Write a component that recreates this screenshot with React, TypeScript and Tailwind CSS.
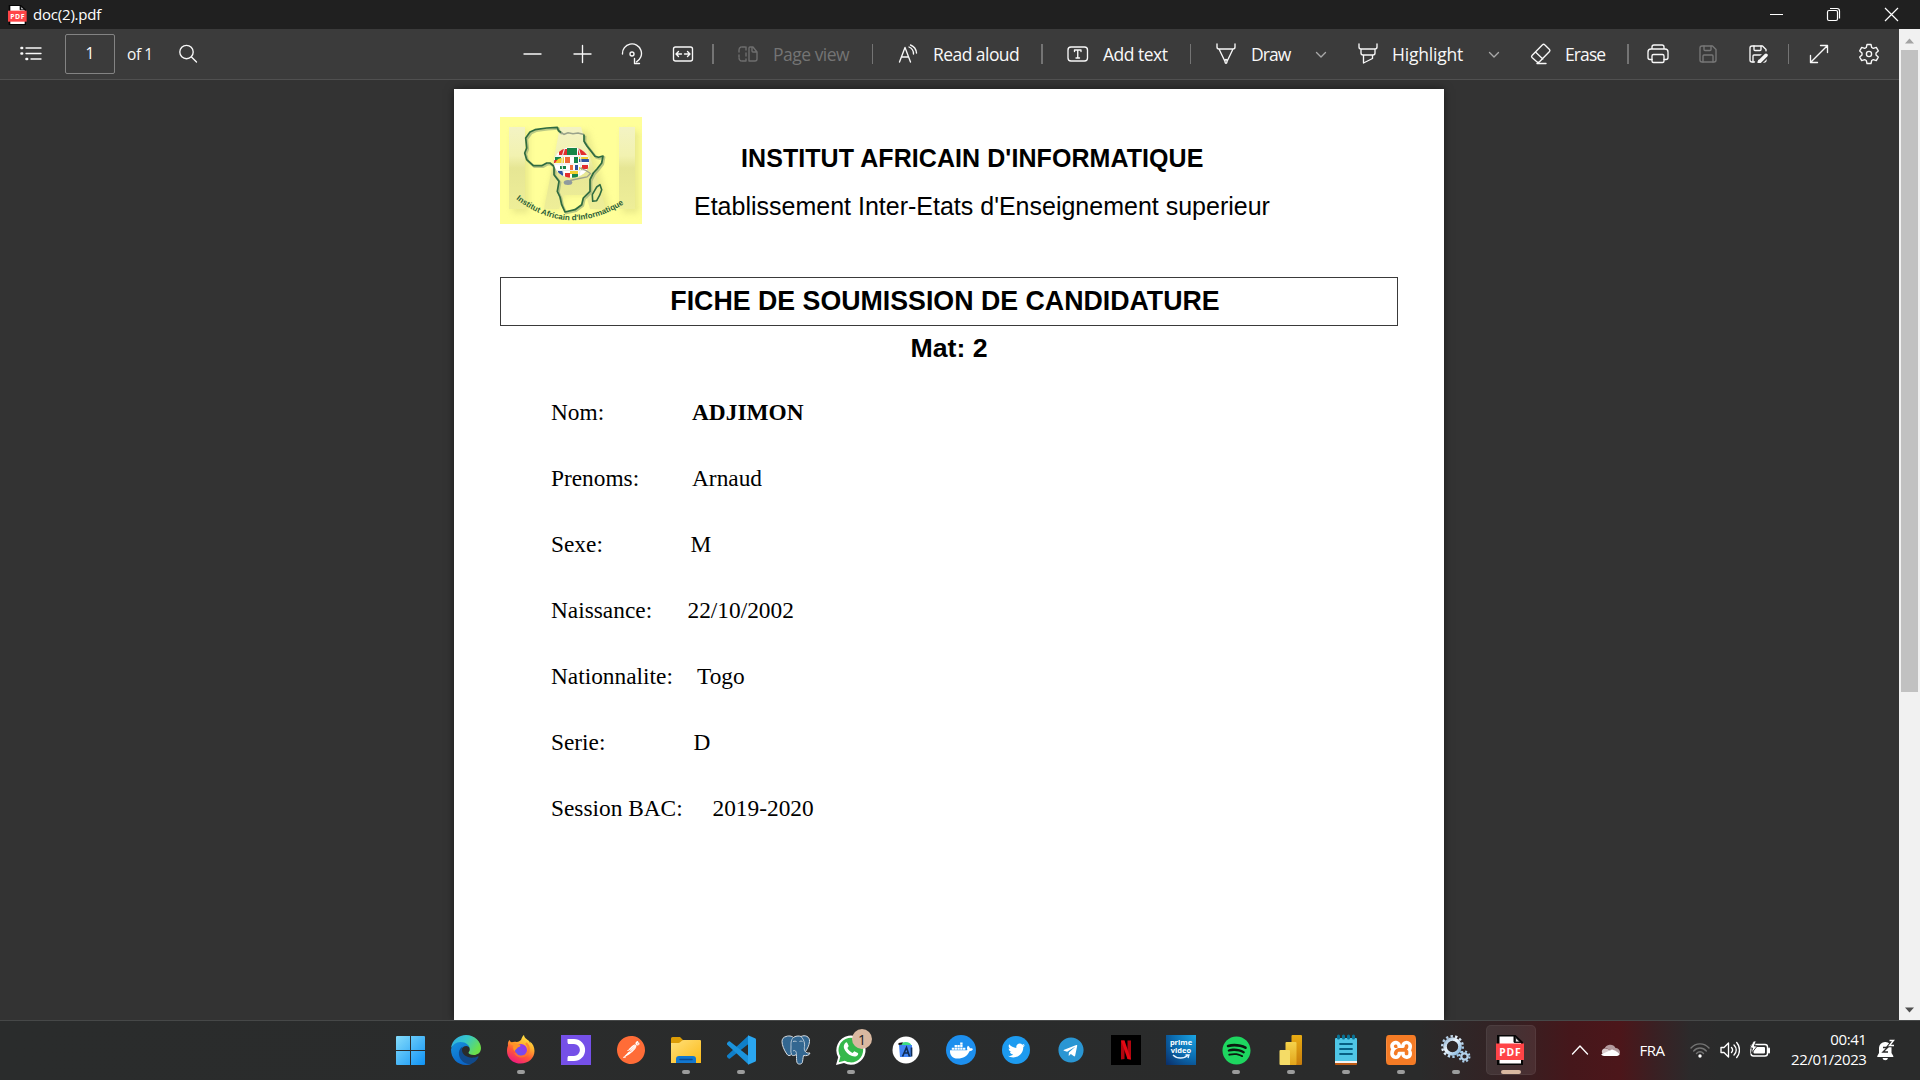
import type { ReactNode } from "react";
import { FaDocker, FaSpotify, FaTelegram, FaTwitter } from "react-icons/fa";
import { SiPostman, SiXampp } from "react-icons/si";

const UI = "font-['Open_Sans','Noto_Sans',sans-serif]";

/* ---------- Toolbar ---------- */

function Line({ size = 20, h, children, className = "" }: { size?: number; h?: number; children: ReactNode; className?: string }) {
  return (
    <svg
      width={size}
      height={h ?? size}
      viewBox={`0 0 ${size} ${h ?? size}`}
      fill="none"
      stroke="currentColor"
      strokeWidth="1.35"
      strokeLinecap="round"
      strokeLinejoin="round"
      className={`block shrink-0 ${className}`}
    >
      {children}
    </svg>
  );
}

function Sep({ className }: { className: string }) {
  return <div className={`h-5 shrink-0 bg-[#747474] ${className}`} />;
}

function Label({ className, children }: { className: string; children: ReactNode }) {
  return <span className={`block shrink-0 whitespace-nowrap leading-[24px] ${className}`}>{children}</span>;
}

function Floppy() {
  return (
    <>
      <path d="M1 3a2 2 0 0 1 2-2h10.5L17 4.500V15a2 2 0 0 1-2 2H3a2 2 0 0 1-2-2z" />
      <path d="M5 1v3.500a1 1 0 0 0 1 1h5a1 1 0 0 0 1-1V1M4 17v-6a1 1 0 0 1 1-1h8a1 1 0 0 1 1 1v6" />
    </>
  );
}

function Toolbar() {
  return (
    <div className="flex h-[51px] items-center border-b border-[#505050] bg-[#3b3b3b] text-[17.500px] text-[#f8f8f8]">
      <Line size={22} h={16} className="ml-5">
        <path d="M6 2h15M6 7.500h15M11 13h10" />
        <path d="M1.500 2h.6M1.500 7.500h.6M6.500 13h.6" strokeWidth="2.600" />
      </Line>
      <div className="ml-[23px] flex h-10 w-[50px] shrink-0 items-center justify-center rounded-[2px] border border-[#838383] text-[15.500px] text-white">1</div>
      <Label className="ml-[12px] w-[39px] text-[15.500px] tracking-[-0.4px]">of 1</Label>
      <Line size={20} className="ml-[12px]">
        <circle cx="8.500" cy="8" r="6.700" />
        <path d="M13.500 13l5 5" />
      </Line>

      <Line className="ml-[325px]"><path d="M1 10h17" /></Line>
      <Line className="ml-[30px]"><path d="M1 10h17M9.500 1.500v17" /></Line>
      <Line size={22} className="ml-[28px]">
        <path d="M1.500 11a9.500 9.500 0 1 1 14 7.800M13.500 15.500v5h5" />
        <circle cx="11" cy="11" r="2" />
      </Line>
      <Line size={22} h={18} className="ml-[29px]">
        <rect x="1.500" y="2" width="19" height="14" rx="2" />
        <path d="M9.500 9H4.500M6.500 6.500L4 9l2.500 2.500M12.500 9h5M15.500 6.500L18 9l-2.500 2.500" />
      </Line>
      <Sep className="ml-[18px] w-[2px]" />
      <Line size={20} h={18} className="ml-6 text-[#6f6f6f]">
        <path d="M7 2H4M1 5v2M1 10v2M4 16h3M1 5a3 3 0 0 1 2-3M1 13a3 3 0 0 0 2 3M8 2v3M8 8v3M8 14v2" />
        <path d="M12 2h3l4 5v7a2 2 0 0 1-2 2h-6V3a1 1 0 0 1 1-1zM14 2v4a1 1 0 0 0 1 1h4" />
      </Line>
      <Label className="ml-[15px] w-[99px] tracking-[-0.5px] text-[#747474]">Page view</Label>
      <Sep className="w-px" />
      <Line size={20} className="ml-[25px]">
        <path d="M1.500 18L7 3.500 12.500 18M3.500 13h7M11 3a7.500 7.500 0 0 1 4.500 7M12.500 1a9.500 9.500 0 0 1 6 8" />
      </Line>
      <Label className="ml-[15px] w-[108px] tracking-[-0.55px]">Read aloud</Label>
      <Sep className="w-[2px]" />
      <Line size={22} h={18} className="ml-6">
        <rect x="1" y="2" width="19.500" height="14" rx="3" />
        <path d="M7.500 6.500V5H14v1.500M10.750 5v8M9 13h3.500" />
      </Line>
      <Label className="ml-[14px] w-[87px] tracking-[-0.5px]">Add text</Label>
      <Sep className="w-px" />
      <Line size={20} h={22} className="ml-[25px]">
        <path d="M1 1v3a2 2 0 0 0 2 2h14a2 2 0 0 0 2-2V1M3 6l6 12.500M17 6l-6 12.500M9 18c0 3 2 3 2 0 0-2-2-2-2 0z" />
      </Line>
      <Label className="ml-[15px] w-[64px] tracking-[-0.9px]">Draw</Label>
      <Line size={12} h={8} className="mt-0.5 text-[#a8a8a8]"><path d="M1.500 1.500L6 6l4.500-4.500" /></Line>
      <Line size={20} h={22} className="ml-[31px]">
        <path d="M1 1v3a2 2 0 0 0 2 2h14a2 2 0 0 0 2-2V1M3 6v4a2 2 0 0 0 2 2h10a2 2 0 0 0 2-2V6M5.500 12v8l9-4.500V12" />
      </Line>
      <Label className="ml-[14px] w-[96px] tracking-[-0.2px]">Highlight</Label>
      <Line size={12} h={8} className="mt-0.5 text-[#a8a8a8]"><path d="M1.500 1.500L6 6l4.500-4.500" /></Line>
      <Line size={22} className="ml-[30px]">
        <path d="M2 12.500L12.500 1.700a1.500 1.500 0 0 1 2.200 0L19.500 6.500a1.500 1.500 0 0 1 0 2L9.500 18.700a2 2 0 0 1-2.700 0L2 14.500a1.500 1.500 0 0 1 0-2zM5.500 9l7.300 7M7 20.500h9" />
      </Line>
      <Label className="ml-[13px] w-[62px] tracking-[-0.9px]">Erase</Label>
      <Sep className="w-[2px]" />
      <Line size={22} h={20} className="ml-[18px]">
        <path d="M5 4.500V3a2 2 0 0 1 2-2h8a2 2 0 0 1 2 2v1.500M5 15.500H3a2 2 0 0 1-2-2V8a3 3 0 0 1 3-3h14a3 3 0 0 1 3 3v5.500a2 2 0 0 1-2 2h-2" />
        <rect x="5" y="10.500" width="12" height="8" rx="1.500" />
      </Line>
      <Line size={18} className="ml-[30px] text-[#777]"><Floppy /></Line>
      <Line size={20} h={18} className="ml-[32px]">
        <Floppy />
        <path d="M9.500 17.500l7.500-7.500" stroke="#3b3b3b" strokeWidth="7" />
        <path d="M10.500 16.800L17 10.300" strokeWidth="3.500" />
        <path d="M9 18.300l1-3" />
      </Line>
      <Sep className="ml-[19px] w-px" />
      <Line className="ml-5">
        <path d="M1.500 18.500L18.500 1.500M11.500 1.500h7v7M1.500 11.500v7h7" />
      </Line>
      <Line size={22} className="ml-[29px] mb-px">
        <path d="M9 1.500h4l.7 3 1.600.9 3-1 2 3.500-2.300 2.100v2l2.300 2.100-2 3.500-3-1-1.600.9-.7 3H9l-.7-3-1.600-.9-3 1-2-3.500L4 12V10L1.700 7.900l2-3.500 3 1 1.600-.9z" />
        <circle cx="11" cy="11" r="2.600" />
      </Line>
    </div>
  );
}

/* ---------- Document ---------- */

function InstituteLogo() {
  const coast =
    "M84 17.500L84 24.300 87 29 90 32.700 95 39.300 98.500 40.300 103 39 101.700 46 97 52 93.300 56 90 62.700 90 69 90 74.300 83.300 81 81.700 87.700 75 92.700 65 95 61.700 87.700 60 80 57.300 74.300 59 64.300 54 57.700 54 49.300 50 46 46.700 46 41.700 48.700 33.300 48.700 26.700 42.700 24.700 36 26.700 31 25.700 21 30 15 35 12.700 46.700 11 57.300 10.300 58.300 13.500 61 15.500";
  return (
    <svg width="142" height="107" viewBox="0 0 142 107" className="block">
      <defs>
        <linearGradient id="pillar" x1="0" y1="0" x2="0" y2="1">
          <stop offset="0" stopColor="#f3f3c4" />
          <stop offset=".35" stopColor="#f2f2b0" />
          <stop offset=".5" stopColor="#e6e694" />
          <stop offset="1" stopColor="#eeee98" />
        </linearGradient>
        <clipPath id="ball"><ellipse cx="71.600" cy="45.500" rx="17.600" ry="15.200" /></clipPath>
        <filter id="soft"><feGaussianBlur stdDeviation="3" /></filter>
      </defs>
      <rect width="142" height="107" fill="#ffff99" />
      <g fill="#dede84" opacity=".65" filter="url(#soft)">
        <path d="M12 14h17v82H12zM122 14h17v82h-17zM62 14h26l22 78H95l-4-14H64l-4 14H44z" />
      </g>
      <g fill="url(#pillar)">
        <path d="M9 10h16v82H9zM119 10h16v82h-16z" />
        <path d="M60 10h21l25 82H90l-4-14H64l-5 14H44z" />
      </g>
      <path d={coast} fill="none" stroke="#8fa777" strokeWidth="2.400" strokeLinejoin="round" opacity=".6" transform="translate(1.200 1.200)" />
      <path d="M61 15.500l3 1.800 4-1.600 5 1 5-.7 6 1.500" fill="none" stroke="#9aa38b" strokeWidth="1.500" />
      <path d={coast} fill="none" stroke="#2f6b40" strokeWidth="1.700" strokeLinejoin="round" />
      <path d="M100 67.700l1.700 5-2 5.500-3 5.500-4 .6-.4-6.600 2-3.500 2.400-4.200z" fill="none" stroke="#2f6b40" strokeWidth="1.600" strokeLinejoin="round" />
      <g clipPath="url(#ball)">
        <rect x="54" y="30" width="36" height="31" fill="#fff" />
        <path d="M59 32h9v6h-9zM78 31h9v7h-9zM54 43h5v3h-5zM82 48h6v4h-6zM65 56h5v5h-5z" fill="#e22d2d" />
        <path d="M67 31h10v7H67zM74 40h4v6h-4zM60 49h6v3h-6zM72 57h6v4h-6zM55 40h6v3h-6z" fill="#168548" />
        <path d="M58 42l6-2v6h-9zM70 54h8v3h-8zM79 40h9v2h-9zM79 50h3v4h-3z" fill="#f1cf30" />
        <path d="M65 40h5v6h-5zM70 48h3v5h-3z" fill="#ef6b38" />
        <path d="M79 42h10v3H79zM58 54h5v5h-5zM75 48h3v5h-3z" fill="#2f53a0" />
        <path d="M54 39h36M54 47h36M54 53.500h36M65 30c-4 10-4 21 0 32M78 30c4 10 4 21 0 32" fill="none" stroke="#e9ece9" strokeWidth="1.100" />
      </g>
      <path d="M80 51l6 2.500 4.500 3L87 60l-17 3.500" fill="none" stroke="#9da28c" strokeWidth="1.300" />
      <ellipse cx="68" cy="65.500" rx="4.300" ry="2.500" fill="#8f9a9e" />
      <path id="motto" d="M16 82Q70 124 130 83" fill="none" />
      <text fontFamily="Liberation Sans" fontSize="8" fontWeight="bold" fill="#2d5f38">
        <textPath href="#motto">Institut Africain d'Informatique</textPath>
      </text>
    </svg>
  );
}

const rows: { label: string; value: string; w: string; bold?: boolean }[] = [
  { label: "Nom:", value: "ADJIMON", w: "w-[141px]", bold: true },
  { label: "Prenoms:", value: "Arnaud", w: "w-[141px]" },
  { label: "Sexe:", value: "M", w: "w-[139.500px]" },
  { label: "Naissance:", value: "22/10/2002", w: "w-[136.500px]" },
  { label: "Nationnalite:", value: "Togo", w: "w-[146px]" },
  { label: "Serie:", value: "D", w: "w-[142.500px]" },
  { label: "Session BAC:", value: "2019-2020", w: "w-[161.500px]" },
];

function Page() {
  return (
    <div className="h-[931px] w-[990px] shrink-0 bg-white px-[46px] pt-7 font-['Liberation_Sans',Arial,sans-serif] text-black shadow-[0_0_8px_rgba(0,0,0,0.5)]">
      <div className="flex h-[160px]">
        <InstituteLogo />
        <div className="pt-[25px] whitespace-nowrap">
          <div className="ml-[99px] text-[25px] leading-[32px] font-bold tracking-[0.075px]">INSTITUT AFRICAIN D'INFORMATIQUE</div>
          <div className="mt-4 ml-[52px] text-[25px] leading-[32px]">Etablissement Inter-Etats d'Enseignement superieur</div>
        </div>
      </div>
      <div className="flex h-[49px] items-center justify-center border border-[#3a3a3a] pr-2 pb-px text-[26.750px] leading-[30px] font-bold">
        FICHE DE SOUMISSION DE CANDIDATURE
      </div>
      <div className="flex h-[46px] items-center justify-center pb-[2px] text-[26.700px] font-bold">Mat: 2</div>
      <div className="mt-2 pl-[5px] font-['Liberation_Serif','Times_New_Roman',serif] text-[23.350px]">
        {rows.map((r) => (
          <div key={r.label} className="flex h-[66px] items-center pl-[46px]">
            <span className={`shrink-0 whitespace-nowrap ${r.w}`}>{r.label}</span>
            <span className={r.bold ? "font-bold" : ""}>{r.value}</span>
          </div>
        ))}
      </div>
    </div>
  );
}

/* ---------- Taskbar ---------- */

function Pic({ children }: { children: ReactNode }) {
  return <svg width="30" height="30" viewBox="0 0 30 30" className="block overflow-visible">{children}</svg>;
}

function WindowsLogo() {
  return (
    <Pic>
      <defs><linearGradient id="win" x1="0" y1="0" x2="1" y2="1"><stop stopColor="#85dcfb" /><stop offset="1" stopColor="#0f93f5" /></linearGradient></defs>
      <path fill="url(#win)" d="M1 1h13v14H0V2a1 1 0 0 1 1-1zM15 1h13a1 1 0 0 1 1 1v13H15zM0 16h14v14H1a1 1 0 0 1-1-1zM15 16h14v13a1 1 0 0 1-1 1H15z" />
    </Pic>
  );
}

function EdgeLogo() {
  return (
    <Pic>
      <defs>
        <linearGradient id="eg" x1="0" y1="0" x2="1" y2=".5"><stop stopColor="#2fa9e8" /><stop offset=".5" stopColor="#36c8c9" /><stop offset="1" stopColor="#6be04a" /></linearGradient>
        <linearGradient id="eb" x1="0" y1="0" x2=".5" y2="1"><stop stopColor="#1692dc" /><stop offset="1" stopColor="#0b66c9" /></linearGradient>
      </defs>
      <path fill="url(#eg)" d="M0 13C1 5 8 0 15 0c9 0 15 7 15 13 0 5-4 7-7 7-3.500 0-5.500-1-5.500-2.200 0-.8 1.300-1.400 1.300-3.600 0-2.700-3-5.200-7-5.200C6 9 1.500 11 0 13z" />
      <path fill="url(#eb)" d="M0 14.500C1 10 5 7 9.500 7c5.500 0 9.300 3.500 9.300 7 0-2-2-3-3.600-3-3.500 0-5.200 3-5.200 6.500 0 7 7 12 11 11.200-2 .9-4 1.300-6 1.300C6.500 30 0 23.500 0 14.500z" />
      <path fill="#114a8b" d="M11.500 11.500c-3 2-4 5-3.500 8.500 1 6 7 9.800 12 9.100 3.500-1.300 6-4 7.500-7 .3-.7-.3-1-1-.6-1.500.8-3.500 1.200-5.500 1.200-5.500 0-10-3.500-10-7.700 0-1.300.3-2.600.5-3.500z" />
    </Pic>
  );
}

function FirefoxLogo() {
  return (
    <Pic>
      <defs>
        <linearGradient id="ff" x1=".8" y1="0" x2=".3" y2="1"><stop stopColor="#fff04b" /><stop offset=".35" stopColor="#ffb02e" /><stop offset=".65" stopColor="#ff5a36" /><stop offset="1" stopColor="#ef1782" /></linearGradient>
        <linearGradient id="fp" x1="0" y1="1" x2="1" y2="0"><stop stopColor="#5b5df0" /><stop offset="1" stopColor="#a32ee8" /></linearGradient>
      </defs>
      <path fill="url(#ff)" d="M3.500 5c.5 1 1.200 2 2 2.500C7 6.700 9 6.800 10.500 7 13 7 14 5.500 15 5c1-2.500 1.500-4 3-5 .3 3 3 4 5 6 .8 1 1 2 1.300 2.500 0-.8-.2-1.500-.5-2 3 2 4.700 5.700 4.700 9.500 0 7-6 12.500-14 12.500S1 23 1 16c0-2 .3-4 1-5.500C1.700 8.500 2 6.500 3.500 5z" />
      <circle cx="15" cy="15" r="6" fill="url(#fp)" />
      <path fill="#ff9426" d="M3 7c3 0 5 .8 7 2 2 .2 4 .5 4.500 1.500 0 1.500-3 1.500-3.500 3-.8 1-2 1-2.500 3-2-3-1.500-5-1-6-2-1-4-1.500-4.500-3.500z" />
      <path d="M20 8c4 4 3.500 10-1 12.500-4 2-8 .5-10-2.500" fill="none" stroke="#ff762d" strokeWidth="2.200" opacity=".75" />
    </Pic>
  );
}

function FolderIcon() {
  return (
    <Pic>
      <defs><linearGradient id="fo" x1="0" y1="0" x2="1" y2="1"><stop stopColor="#ffe07a" /><stop offset="1" stopColor="#fcba17" /></linearGradient></defs>
      <path fill="#dc9c06" d="M0 3.500A1.500 1.500 0 0 1 1.500 2H9l3.500 3.500L9 9H0z" />
      <path fill="url(#fo)" d="M0 8h7.500c2 0 3-3 5-3H29a1 1 0 0 1 1 1v22H0z" />
      <path fill="#1277cf" d="M5 24a3 3 0 0 1 3-3h14a3 3 0 0 1 3 3v4H5z" />
      <path d="M9 24.500h12" stroke="#0b4a92" strokeWidth="1.500" strokeLinecap="round" />
    </Pic>
  );
}

function VsCodeLogo() {
  return (
    <Pic>
      <path fill="#0f7fc9" d="M1 20.500L22 1l1 7.500L4 23.500c-.5.500-1 .4-1.400 0L1 22z" />
      <path fill="#1b93dc" d="M1 9.500L22 29l1-7.500L4 6.500c-.5-.4-1-.4-1.400 0L1 8z" />
      <path fill="#2aa6f0" d="M22 0.200L29 3.200a1.500 1.500 0 0 1 1 1.500v20.600a1.500 1.500 0 0 1-1 1.500l-7 3z" />
    </Pic>
  );
}

function PostgresLogo() {
  return (
    <Pic>
      <path fill="#336791" stroke="#d9dee3" strokeWidth="1" strokeLinejoin="round" d="M5 1.500C9 0 12 2 12.500 2.500 14 1 18 .5 20 1.500c4-2 9 0 8.500 5-.3 4-2 7-4 10 .5 1.500 3 1.700 4.500 1.500-.5 2.500-4 3-6.500 2.500-.7 3-.7 5.500-1.200 7-.7 2-4.600 2.300-5.300 0-.7-2-.3-6-.7-8-2 1.500-4 1.300-5 0-1.500 1.500-3.300 1.500-4.500-.5C3 15 1 10 1 6.500 1 4 2.500 2 5 1.500z" />
      <path fill="none" stroke="#c4d0da" strokeWidth=".9" d="M12.500 2.500C9.500 5 10 9 10 12c0 3-.5 5 .5 7M20 1.500c3 3 4 7 3.500 10-.2 1.700-.5 3 .5 5M12 16c2-1.500 3.500.5 3.500 3.500M12 6.500c1.500-.5 2.500-.3 3.500 0M18.500 6.500c1-.5 2-.5 3 0" />
    </Pic>
  );
}

function WhatsAppIcon() {
  return (
    <div className="relative h-[30px] w-[30px]">
      <svg width="30" height="30" viewBox="0 0 30 30" className="block">
        <path fill="#fff" d="M0 30l2.200-7.700A14.600 14.600 0 1 1 8 28z" />
        <path fill="#35b84b" d="M2.800 27.200l1.600-5.600A12.300 12.300 0 1 1 8.800 25.800z" />
        <path fill="#fff" d="M9.300 8c.9-.9 1.600-.8 2 0l1.300 2.800c.3.700-1 1.800-1.200 2.300.8 2 2.800 4 5.200 4.800.6-.1 1.500-1.800 2.200-1.500l3 1.500c.7.400.4 1.500-.2 2.300-1.200 1.500-3.500 1.600-5.600.8-4-1.500-7-4.700-8-7.800-.6-2 .1-4 1.300-5.200z" />
      </svg>
      <div className="absolute -top-[6px] left-[16px] flex h-5 w-5 items-center justify-center rounded-full bg-[#d9b8a0] text-[14px] text-[#202020]">1</div>
    </div>
  );
}

function AndroidStudioIcon() {
  return (
    <Pic>
      <circle cx="15" cy="15" r="13.500" fill="#fff" />
      <path fill="#3ddc84" d="M9 10.500a6 5 0 0 1 11.500 0z" />
      <path fill="#111" d="M7.500 8l4.500-.8-1.500 2.500-3 .3z" />
      <path fill="#4285f4" d="M8 10h13v9l-1 3H9z" />
      <path d="M11.500 21.500l4-9 3 9M13 18h5M20.500 12.500v9" fill="none" stroke="#102d55" strokeWidth="1.700" />
    </Pic>
  );
}

function PowerBiIcon() {
  return (
    <Pic>
      <defs>
        <linearGradient id="p1" x1="0" y1="0" x2="0" y2="1"><stop stopColor="#e9ac13" /><stop offset="1" stopColor="#c67c0c" /></linearGradient>
        <linearGradient id="p2" x1="0" y1="0" x2="0" y2="1"><stop stopColor="#f5d24a" /><stop offset="1" stopColor="#e2a51b" /></linearGradient>
      </defs>
      <rect x="15.500" y="0" width="10.500" height="30" rx="1" fill="url(#p1)" />
      <rect x="9.500" y="7" width="11" height="23" rx="1" fill="url(#p2)" />
      <path fill="#f5dc67" d="M4.500 15H13a1 1 0 0 1 1 1v14H4.500a1 1 0 0 1-1-1V16a1 1 0 0 1 1-1z" />
    </Pic>
  );
}

function NotepadIcon() {
  return (
    <Pic>
      <path fill="#bf5b14" d="M4 26h22v3a1 1 0 0 1-1 1H5a1 1 0 0 1-1-1z" />
      <path fill="#f3f3f3" d="M4 25h22v3H4z" />
      <path fill="#4fc6e6" d="M4 4a1 1 0 0 1 1-1h20a1 1 0 0 1 1 1v22H4z" />
      <path d="M9 9h12M9 14h12M9 19h12" stroke="#075f83" strokeWidth="1.800" strokeLinecap="round" />
      <path d="M7.500 1v2M12.500 1v2M17.500 1v2M22.500 1v2" stroke="#0a7396" strokeWidth="3" strokeLinecap="round" />
    </Pic>
  );
}

function GearsIcon() {
  return (
    <Pic>
      <defs><linearGradient id="gr" x1="0" y1="0" x2="1" y2="1"><stop stopColor="#8eb2d3" /><stop offset=".4" stopColor="#eef7ff" /><stop offset="1" stopColor="#7fb3dd" /></linearGradient></defs>
      <circle cx="11.500" cy="11.500" r="10.300" fill="none" stroke="url(#gr)" strokeWidth="2.400" strokeDasharray="2.400 2.220" />
      <circle cx="11.500" cy="11.500" r="7.500" fill="none" stroke="url(#gr)" strokeWidth="3.600" />
      <circle cx="23.500" cy="21.500" r="5" fill="none" stroke="#a9cdea" strokeWidth="2" strokeDasharray="2 1.927" />
      <circle cx="23.500" cy="21.500" r="3.200" fill="none" stroke="#b5d3ec" strokeWidth="2.200" />
    </Pic>
  );
}

function PdfIcon({ size = 30 }: { size?: number }) {
  return (
    <svg width={size} height={size} viewBox="0 0 30 30" className="block shrink-0">
      <path fill="#050505" d="M1 0h18.500L27 7v23H1z" />
      <path fill="#fff" d="M3.500 1.500h14V7l1 1H25v20.500H3.500z" />
      <path fill="#2e2e30" d="M19 1.500L25 7.500h-6z" />
      <path fill="#e8e8e8" d="M20 3.500L23 6.500H20z" />
      <rect x="0" y="8.500" width="28" height="16.500" fill="#ff4447" />
      <text x="14.400" y="20.500" textAnchor="middle" fontFamily="Open Sans" fontWeight="bold" fontSize="10.300" letterSpacing=".8" fill="#fff">PDF</text>
    </svg>
  );
}

const apps: { name: string; icon: ReactNode; running?: boolean; active?: boolean }[] = [
  { name: "start", icon: <WindowsLogo /> },
  { name: "edge", icon: <EdgeLogo /> },
  { name: "firefox", icon: <FirefoxLogo />, running: true },
  {
    name: "dashlane",
    icon: (
      <Pic>
        <rect width="30" height="30" fill="#7550e8" />
        <path d="M6.500 6.500h6.500a8.500 8.500 0 0 1 0 17H6.500" fill="none" stroke="#fff" strokeWidth="5.200" />
        <path d="M3 3l6 8.500c.8 2 .8 5 0 7L3 27z" fill="#7550e8" />
      </Pic>
    ),
  },
  { name: "postman", icon: <div className="h-[28px] w-[28px] rounded-full bg-[radial-gradient(circle,#fff_55%,transparent_60%)]"><SiPostman size={28} color="#ff6c37" /></div> },
  { name: "explorer", icon: <FolderIcon />, running: true },
  { name: "code", icon: <VsCodeLogo />, running: true },
  { name: "postgres", icon: <PostgresLogo /> },
  { name: "whatsapp", icon: <WhatsAppIcon />, running: true },
  { name: "android", icon: <AndroidStudioIcon /> },
  { name: "docker", icon: <div className="flex h-[30px] w-[30px] items-center justify-center rounded-full bg-[#1d8fee]"><FaDocker size={23} color="#fff" /></div> },
  { name: "twitter", icon: <div className="flex h-7 w-7 items-center justify-center rounded-full bg-[#1d9bf0]"><FaTwitter size={17} color="#fff" /></div> },
  {
    name: "telegram",
    icon: <div className="h-[26px] w-[26px] rounded-full bg-[radial-gradient(circle,#fff_55%,transparent_60%)]"><FaTelegram size={26} color="#2a96d3" /></div>,
  },
  {
    name: "netflix",
    icon: (
      <Pic>
        <rect width="30" height="30" fill="#000" />
        <path fill="#b1060f" d="M10 5.500h3.500V24L10 24.500zM16.500 5.500H20v19l-3.500-.5z" />
        <path fill="#e50914" d="M10 5.500h3.500L20 24.500l-3.500-.5z" />
      </Pic>
    ),
  },
  {
    name: "prime",
    icon: (
      <div className="flex h-[30px] w-[30px] flex-col items-center bg-[radial-gradient(circle_at_100%_0%,#1aa5e4,#0b6cb0_55%,#0a2c66)] pt-[4px] text-[7.500px] leading-[7.500px] font-bold text-white">
        <span>prime</span>
        <span>video</span>
        <svg width="18" height="6" viewBox="0 0 18 6" fill="none" stroke="#e6f4ff" strokeWidth="1.300"><path d="M1 1c4 4 11 4 15 0M13.500 .8H17L16 4" /></svg>
      </div>
    ),
  },
  { name: "spotify", icon: <div className="h-[29px] w-[29px] rounded-full bg-[radial-gradient(circle,#0b1a10_55%,transparent_60%)]"><FaSpotify size={29} color="#1ed760" /></div>, running: true },
  { name: "powerbi", icon: <PowerBiIcon />, running: true },
  { name: "notepad", icon: <NotepadIcon />, running: true },
  { name: "xampp", icon: <div className="h-[30px] w-[30px] rounded-[6px] bg-white"><SiXampp size={30} color="#f47b25" /></div>, running: true },
  { name: "services", icon: <GearsIcon />, running: true },
  { name: "pdf", icon: <PdfIcon />, active: true },
];

function Tray() {
  return (
    <div className="ml-[32px] flex items-center text-white">
      <Line size={18} h={12}><path d="M1.500 10L9 2l7.500 8" /></Line>
      <svg width="20" height="14" viewBox="0 0 20 14" className="mb-px ml-[11px] block shrink-0">
        <path fill="#b39a9d" d="M4.500 6A6 6 0 0 1 15.500 5 4.500 4.500 0 0 1 20 9.500c0 1-.3 2-1 2.500L6 5z" />
        <path fill="#d9cccd" d="M4 5.500c2-.3 4 .3 5 1.300l7 5.200H4A3.500 3.500 0 0 1 4 5.500z" />
        <path fill="#fff" d="M1 11.500L12 6.500c4 1 6.500 3 7.500 5A3 3 0 0 1 17 13H4a4 4 0 0 1-3-1.500z" />
      </svg>
      <span className="ml-[20px] block w-[30px] shrink-0 text-[15px] tracking-[-0.5px]">FRA</span>
      <svg width="20" height="16" viewBox="0 0 20 16" fill="none" stroke="#747474" strokeWidth="1.400" strokeLinecap="round" className="ml-[20px] block shrink-0">
        <path d="M1 6c5-5.500 13-5.500 18 0M3.700 9c3.500-4 9-4 12.600 0M6.500 11.500c2-2.300 5-2.300 7 0" />
        <circle cx="10" cy="14" r="1.700" fill="#fff" stroke="none" />
      </svg>
      <Line size={20} h={18} className="ml-[10px]">
        <path d="M1 6.500h3L8.500 2v14L4 11.500H1zM11.500 6.500c1.300 1.500 1.300 3.500 0 5M14 4c3 3 3 7 0 10M16.700 1.500c3.700 4.300 3.700 10.700 0 15" />
      </Line>
      <svg width="22" height="18" viewBox="0 0 22 18" className="ml-[9px] block shrink-0">
        <rect x="2" y="3.500" width="16.500" height="11.500" rx="2.500" fill="none" stroke="#fff" strokeWidth="1.400" />
        <rect x="4.500" y="6" width="11.500" height="6.500" rx="1" fill="#fff" />
        <path d="M20 7.500v4" stroke="#fff" strokeWidth="2" strokeLinecap="round" />
        <path d="M4.500 0L.8 7h2.700L2.300 12.500 8.300 5H5.300L7.300 0z" fill="#fff" stroke="#2b2b2c" strokeWidth=".9" />
      </svg>
      <div className="mb-[2px] ml-[13px] w-[83px] shrink-0 text-right text-[15px] leading-5 tracking-[-0.42px] whitespace-nowrap">
        <div>00:41</div>
        <div>22/01/2023</div>
      </div>
      <svg width="18" height="22" viewBox="0 0 18 22" className="ml-[10px] block shrink-0">
        <path fill="#fff" d="M8 3a6 6 0 0 0-6 6v5L.3 17v1h16v-1L14.500 14V9A6 6 0 0 0 8 3zM5.500 19h5.500a2.800 2.800 0 0 1-5.500 0z" />
        <path d="M6 8.500h4.500L6 13h5" fill="none" stroke="#2b2b2b" strokeWidth="1.400" />
        <path d="M12.500 1.500h4L12.500 6.500h4.500" fill="none" stroke="#2b2b2b" strokeWidth="3.500" />
        <path d="M12.500 1.500h4L12.500 6.500h4.500" fill="none" stroke="#fff" strokeWidth="1.400" />
      </svg>
    </div>
  );
}

function Taskbar() {
  return (
    <div className="flex h-[60px] items-center border-t border-[#464848] bg-[linear-gradient(90deg,#2a2c2c_0px,#2a2b2b_1420px,#352123_1510px,#45171b_1570px,#4c161a_1620px,#3a2023_1655px,#2c2a2b_1690px,#2a2b2b_1720px)] pb-px pl-[383.500px]">
      {apps.map((a) => (
        <div key={a.name} className="flex w-[55px] shrink-0 justify-center">
          <div
            className={
              a.active
                ? "grid h-[50px] w-[50px] grid-rows-[39px_1fr] justify-items-center rounded-[5px] border border-white/5 bg-white/8"
                : "grid h-[50px] w-[50px] grid-rows-[39px_1fr] justify-items-center border border-transparent"
            }
          >
            <div className="flex h-[48px] items-center justify-center">{a.icon}</div>
            <div className="flex items-end pt-[5px]">
              {a.running && <div className="h-1 w-2 rounded-full bg-[#9b9c9c]" />}
              {a.active && <div className="h-1 w-5 rounded-full bg-[#d9b8a0]" />}
            </div>
          </div>
        </div>
      ))}
      <Tray />
    </div>
  );
}

/* ---------- Window ---------- */

export default function App() {
  return (
    <div className={`flex h-[1080px] w-[1920px] flex-col overflow-hidden bg-[#333] ${UI}`}>
      <div className="flex h-[29px] shrink-0 items-center bg-[#202020] text-white">
        <div className="ml-[8px]"><PdfIcon size={20} /></div>
        <span className="ml-[5px] text-[15px] tracking-[-0.2px]">doc(2).pdf</span>
        <div className="ml-auto flex items-center pr-[21px]">
          <div className="h-px w-[13px] bg-white" />
          <svg width="15" height="15" viewBox="0 0 15 15" fill="none" stroke="#fff" strokeWidth="1.200" className="ml-[43px] block">
            <rect x="1.500" y="3.500" width="10" height="10" rx="1.500" />
            <path d="M4 1.500h7A2.500 2.500 0 0 1 13.500 4v7.500" />
          </svg>
          <svg width="15" height="15" viewBox="0 0 15 15" stroke="#fff" strokeWidth="1.200" className="ml-[43px] block"><path d="M1 1l13 13M14 1L1 14" /></svg>
        </div>
      </div>
      <div className="flex h-[991px] shrink-0">
        <div className="w-[1899px]">
          <Toolbar />
          <div className="flex h-[940px] overflow-hidden bg-[#333] pt-[9px] pl-[454px]">
            <Page />
          </div>
        </div>
        <div className="flex w-[21px] flex-col items-center bg-[#f1f1f1]">
          <svg width="21" height="21" viewBox="0 0 21 21" className="block shrink-0"><path d="M6 14.500l4.500-5 4.500 5z" fill="#a3a3a3" /></svg>
          <div className="h-[642px] w-[17px] bg-[#c1c1c1]" />
          <svg width="21" height="21" viewBox="0 0 21 21" className="mt-auto block shrink-0"><path d="M6 8.500l4.500 5 4.500-5z" fill="#505050" /></svg>
        </div>
      </div>
      <Taskbar />
    </div>
  );
}
